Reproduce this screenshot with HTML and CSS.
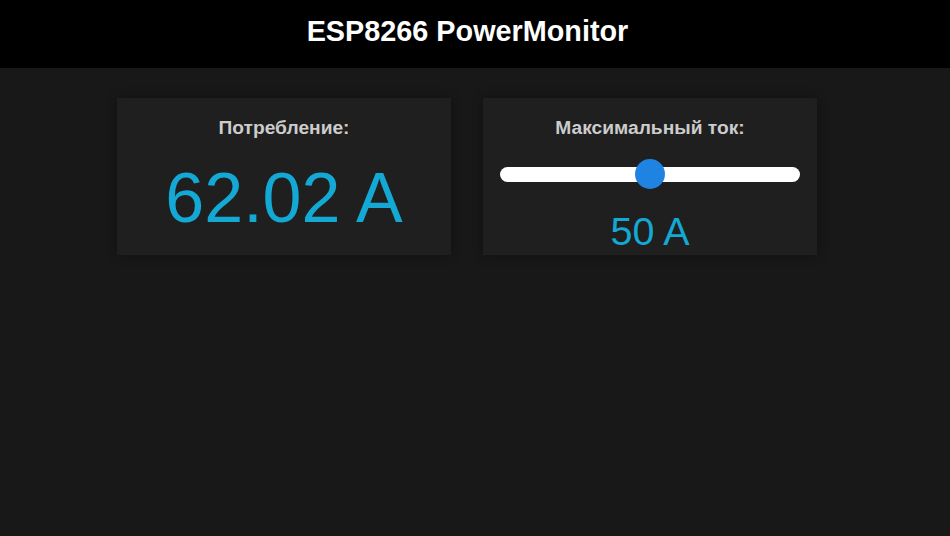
FILE: index.html
```html
<!DOCTYPE html>
<html lang="ru">
<head>
<meta charset="utf-8">
<title>ESP8266 PowerMonitor</title>
<link rel="stylesheet" href="styles.css">
</head>
<body>
<header class="topbar">
  <h1 class="title">ESP8266 PowerMonitor</h1>
</header>
<main class="cards">
  <section class="card">
    <h2 class="card-label">Потребление:</h2>
    <div class="value value-big">62.02 A</div>
  </section>
  <section class="card">
    <h2 class="card-label">Максимальный ток:</h2>
    <input class="slider" type="range" min="0" max="100" value="50">
    <div class="value value-small">50 A</div>
  </section>
</main>
</body>
</html>
```
FILE: styles.css
```css
html, body {
  margin: 0;
  padding: 0;
}
body {
  background: #181818;
  font-family: "Liberation Sans", Arial, sans-serif;
  color: #ccc;
  min-height: 536px;
}
.topbar {
  background: #000;
  height: 68px;
  box-sizing: border-box;
  padding: 15px 15px 0 0;
  text-align: center;
}
.title {
  margin: 0;
  font-size: 28.8px;
  line-height: 33px;
  font-weight: bold;
  color: #fff;
}
.cards {
  display: flex;
  justify-content: center;
  gap: 32px;
  padding: 30px 16px 0 0;
}
.card {
  width: 334px;
  height: 157px;
  box-sizing: border-box;
  background: #1f1f1f;
  box-shadow: 0 0 10px rgba(0, 0, 0, 0.35);
  padding-top: 19px;
  display: flex;
  flex-direction: column;
  align-items: center;
  text-align: center;
}
.card-label {
  margin: 0;
  font-size: 19.2px;
  line-height: 22px;
  font-weight: bold;
  color: #cccccc;
}
.value {
  color: #14a8d4;
}
.value-big {
  font-size: 70px;
  line-height: 80px;
  margin-top: 19px;
}
.value-small {
  font-size: 39.5px;
  line-height: 45px;
  margin-top: 20px;
}
.slider {
  -webkit-appearance: none;
  appearance: none;
  display: block;
  margin: 20px 0 0 0;
  padding: 0;
  width: 300px;
  height: 30px;
  background: transparent;
  outline: none;
}
.slider::-webkit-slider-runnable-track {
  height: 15px;
  background: #fff;
  border-radius: 8px;
}
.slider::-webkit-slider-thumb {
  -webkit-appearance: none;
  appearance: none;
  width: 30px;
  height: 30px;
  border-radius: 50%;
  background: #1f84e1;
  border: none;
  margin-top: -7.5px;
}
```
